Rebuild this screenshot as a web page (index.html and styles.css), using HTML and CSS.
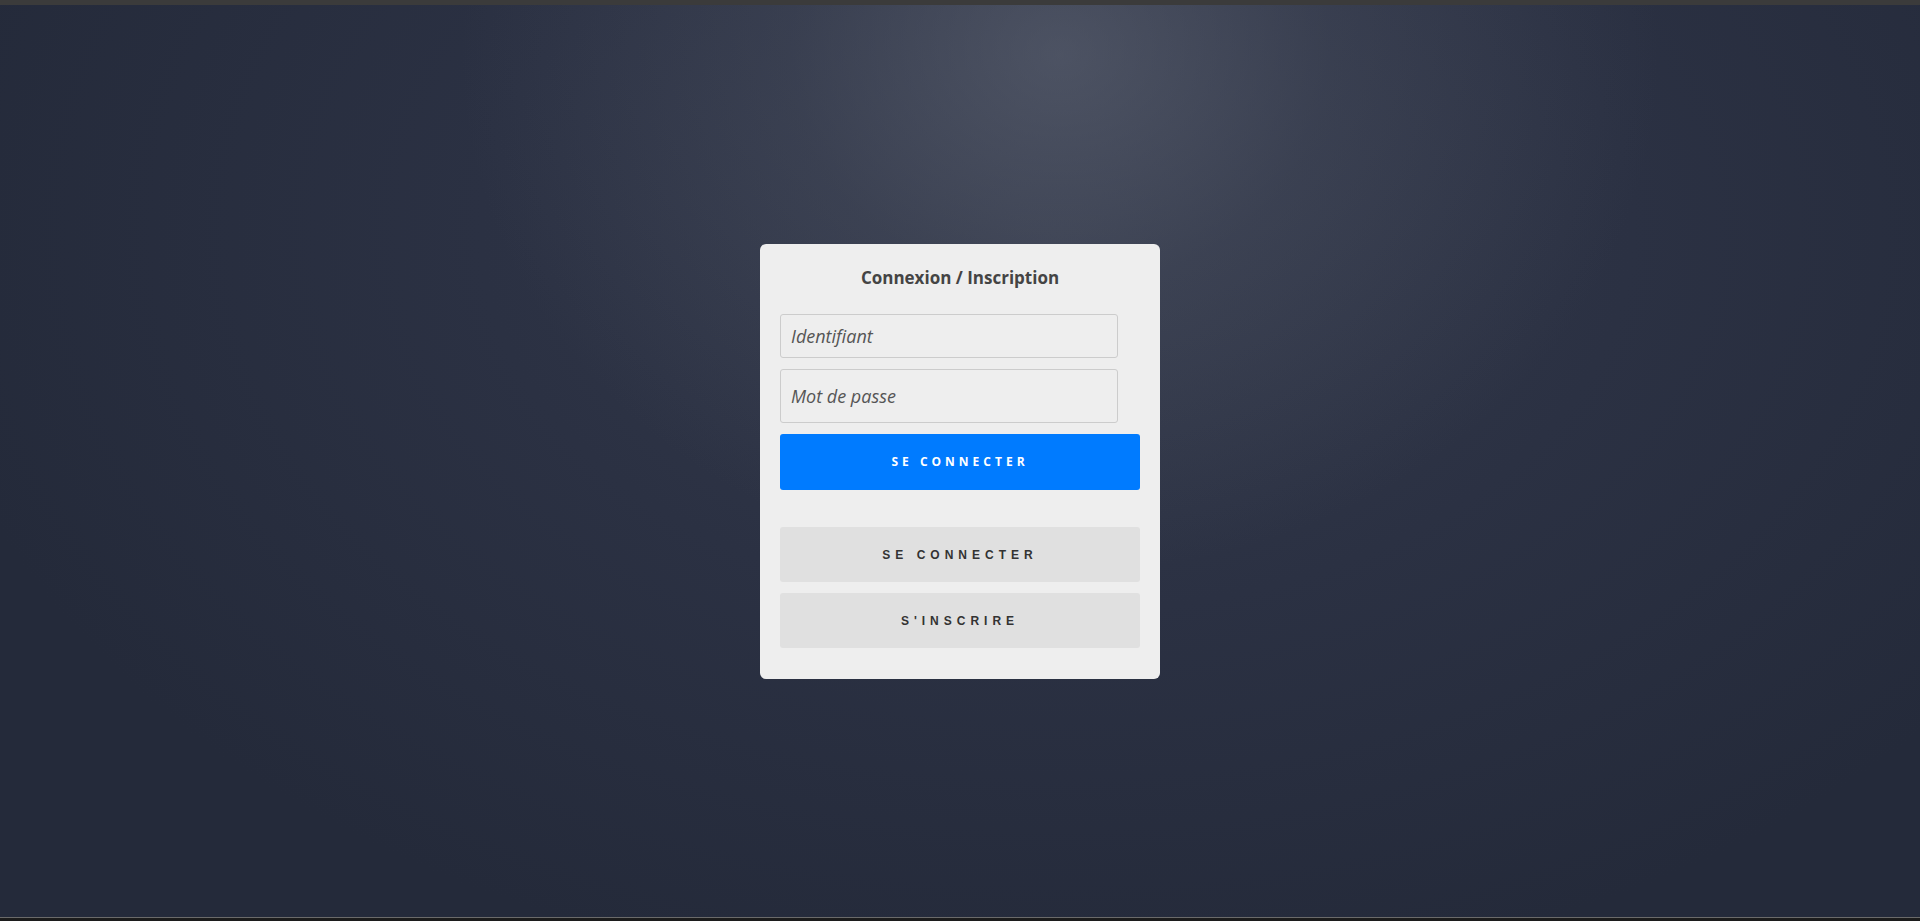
FILE: index.html
```html
<!DOCTYPE html>
<html lang="fr">
<head>
<meta charset="utf-8">
<title>Connexion / Inscription</title>
<link rel="stylesheet" href="styles.css">
</head>
<body>
<div class="topbar"></div>
<main class="stage">
  <form class="card">
    <h2 class="card-title">Connexion / Inscription</h2>
    <input class="field" type="text" placeholder="Identifiant">
    <input class="field field-pass" type="password" placeholder="Mot de passe">
    <button class="btn btn-primary" type="button">SE CONNECTER</button>
    <div class="switch">
      <button class="btn btn-tab" type="button">SE CONNECTER</button>
      <button class="btn btn-tab" type="button">S'INSCRIRE</button>
    </div>
  </form>
</main>
<div class="bottombar"></div>
</body>
</html>
```
FILE: styles.css
```css
* { box-sizing: border-box; }
html, body { height: 100%; }
body {
  margin: 0;
  display: flex;
  flex-direction: column;
  font-family: "Open Sans", "Liberation Sans", sans-serif;
  background: #262c3c;
  overflow: hidden;
}
.topbar {
  height: 5px;
  background: #3b3b3b;
  flex: none;
}
.bottombar {
  height: 4px;
  background: #1c1c1c;
  border-top: 1px solid #6a6a6a;
  flex: none;
}
.stage {
  flex: 1;
  display: flex;
  align-items: center;
  justify-content: center;
  background:
    radial-gradient(ellipse 600px 520px at 1060px 50px, rgba(105,111,126,0.5) 0%, rgba(90,96,112,0.25) 45%, rgba(60,66,82,0) 100%),
    radial-gradient(ellipse 1150px 760px at 55% 25%, #343a4b 0%, #2b3143 50%, #242a3a 100%);
}
.card {
  width: 400px;
  background: #eeeeee;
  border-radius: 6px;
  padding: 22px 20px 31px;
  display: flex;
  flex-direction: column;
}
.card-title {
  margin: 0 0 24px;
  text-align: center;
  font-size: 17px;
  line-height: 24px;
  font-weight: 700;
  color: #444;
}
.field {
  display: block;
  width: 338px;
  height: 44px;
  margin: 0 0 11px;
  padding: 0 10px;
  border: 1px solid #cccccc;
  border-radius: 3px;
  background: #eeeeee;
  font-family: "Open Sans", sans-serif;
  font-size: 18px;
  font-style: italic;
  color: #555;
  outline: none;
}
.field::placeholder { color: #555; font-style: italic; }
.field-pass { height: 54px; }
.btn {
  display: block;
  width: 100%;
  border: 0;
  border-radius: 3px;
  cursor: pointer;
  text-align: center;
}
.btn-primary {
  height: 56px;
  padding-top: 1px;
  background: #007bff;
  color: #fff;
  font-family: "Open Sans", sans-serif;
  font-size: 12px;
  font-weight: 700;
  letter-spacing: 4px;
}
.switch {
  margin-top: 37px;
  display: flex;
  flex-direction: column;
  gap: 11px;
}
.btn-tab {
  height: 55px;
  padding-top: 2px;
  background: #e0e0e0;
  color: #333;
  font-family: "Liberation Sans", Arial, sans-serif;
  font-size: 12px;
  font-weight: 700;
  letter-spacing: 5px;
}
```
